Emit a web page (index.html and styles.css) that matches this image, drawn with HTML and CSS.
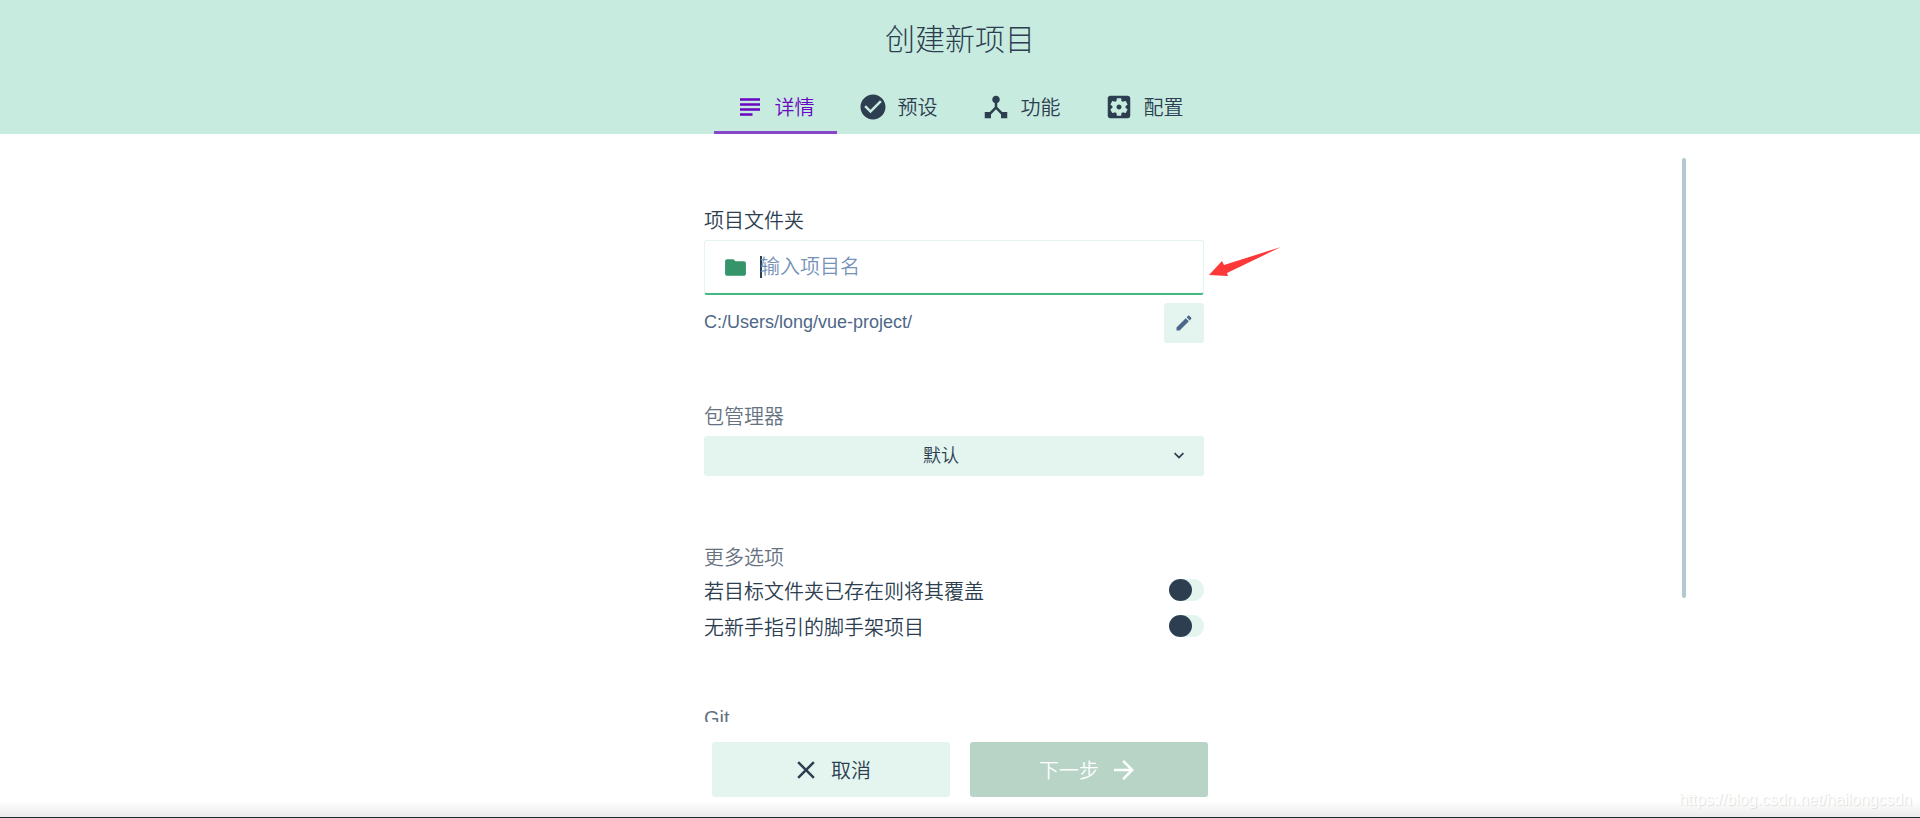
FILE: index.html
```html
<!DOCTYPE html>
<html lang="zh-CN">
<head>
    <meta charset="UTF-8">
    <meta name="viewport" content="width=device-width, initial-scale=1.0">
    <title>创建新项目</title>
    <link rel="stylesheet" href="styles.css">
</head>
<body>
    <header class="header">
        <h1>创建新项目</h1>
        <nav class="tabs">
            <button type="button" class="tab active">
                <svg class="icon" viewBox="0 0 24 24"><path d="M14 17H4v2h10v-2zm6-8H4v2h16V9zM4 15h16v-2H4v2zM4 5v2h16V5H4z"/></svg>
                <span>详情</span>
            </button>
            <button type="button" class="tab">
                <svg class="icon" viewBox="0 0 24 24"><path d="M12 2C6.48 2 2 6.48 2 12s4.48 10 10 10 10-4.48 10-10S17.52 2 12 2zm-2 15l-5-5 1.41-1.41L10 14.17l7.59-7.59L19 8l-9 9z"/></svg>
                <span>预设</span>
            </button>
            <button type="button" class="tab">
                <svg class="icon" viewBox="0 0 24 24"><path d="M17 16l-4-4V8.82C14.16 8.4 15 7.3 15 6c0-1.66-1.34-3-3-3S9 4.34 9 6c0 1.3.84 2.4 2 2.82V12l-4 4H3v5h5v-3.05l4-4.2 4 4.2V21h5v-5h-4z"/></svg>
                <span>功能</span>
            </button>
            <button type="button" class="tab">
                <svg class="icon" viewBox="0 0 24 24"><path d="M12 10c-1.1 0-2 .9-2 2s.9 2 2 2 2-.9 2-2-.9-2-2-2zm7-7H5c-1.11 0-2 .9-2 2v14c0 1.1.89 2 2 2h14c1.11 0 2-.9 2-2V5c0-1.1-.89-2-2-2zm-1.75 9c0 .23-.02.46-.05.68l1.48 1.16c.13.11.17.3.08.45l-1.4 2.42c-.09.15-.27.21-.43.15l-1.74-.7c-.36.28-.76.51-1.18.69l-.26 1.85c-.03.17-.18.3-.35.3h-2.8c-.17 0-.32-.13-.35-.29l-.26-1.85c-.43-.18-.82-.41-1.18-.69l-1.74.7c-.16.06-.34 0-.43-.15l-1.4-2.42c-.09-.15-.05-.34.08-.45l1.48-1.16c-.03-.23-.05-.46-.05-.69 0-.23.02-.46.05-.68l-1.48-1.16c-.13-.11-.17-.3-.08-.45l1.4-2.42c.09-.15.27-.21.43-.15l1.74.7c.36-.28.76-.51 1.18-.69l.26-1.85c.03-.17.18-.3.35-.3h2.8c.17 0 .32.13.35.29l.26 1.85c.43.18.82.41 1.18.69l1.74-.7c.16-.06.34 0 .43.15l1.4 2.42c.09.15.05.34-.08.45l-1.48 1.16c.03.23.05.46.05.69z"/></svg>
                <span>配置</span>
            </button>
        </nav>
    </header>

    <main class="content">
        <form class="form" id="createForm">
            <div class="group">
                <label class="label" for="folder">项目文件夹</label>
                <div class="input-box">
                    <svg class="folder" viewBox="0 0 24 24"><path d="M10 4H4c-1.1 0-1.99.9-1.99 2L2 18c0 1.1.9 2 2 2h16c1.1 0 2-.9 2-2V8c0-1.1-.9-2-2-2h-8l-2-2z"/></svg>
                    <span class="caret"></span>
                    <input type="text" id="folder" placeholder="输入项目名">
                    <svg class="pointer" viewBox="0 0 74 30"><path d="M0 28L13 14L15 18L72 0L18 26L19 29Z"/></svg>
                </div>
                <div class="path-row">
                    <span>C:/Users/long/vue-project/</span>
                    <button type="button" class="edit" aria-label="编辑">
                        <svg viewBox="0 0 24 24"><path d="M3 17.25V21h3.75L17.81 9.94l-3.75-3.75L3 17.25zM20.71 7.04c.39-.39.39-1.02 0-1.41l-2.34-2.34c-.39-.39-1.02-.39-1.41 0l-1.83 1.83 3.75 3.75 1.83-1.83z"/></svg>
                    </button>
                </div>
            </div>

            <div class="group manager">
                <label class="label muted" for="manager">包管理器</label>
                <div class="select-box">
                    <select id="manager">
                        <option>默认</option>
                        <option>npm</option>
                        <option>yarn</option>
                    </select>
                    <svg viewBox="0 0 24 24"><path d="M7.41 7.84L12 12.42l4.59-4.58L18 9.25l-6 6-6-6z"/></svg>
                </div>
            </div>

            <div class="group">
                <div class="label muted">更多选项</div>
                <label class="switch">
                    <span>若目标文件夹已存在则将其覆盖</span>
                    <input type="checkbox">
                </label>
                <label class="switch">
                    <span>无新手指引的脚手架项目</span>
                    <input type="checkbox">
                </label>
            </div>

            <div class="group">
                <div class="label muted">Git</div>
            </div>
        </form>
        <div class="scrollbar"></div>
    </main>

    <footer class="footer">
        <div class="actions">
            <button type="button" class="btn">
                <svg class="icon" viewBox="0 0 24 24"><path d="M19 6.41L17.59 5 12 10.59 6.41 5 5 6.41 10.59 12 5 17.59 6.41 19 12 13.41 17.59 19 19 17.59 13.41 12z"/></svg>
                <span>取消</span>
            </button>
            <button type="submit" form="createForm" class="btn next" disabled>
                <span>下一步</span>
                <svg class="icon" viewBox="0 0 24 24"><path d="M12 4l-1.41 1.41L16.17 11H4v2h12.17l-5.58 5.59L12 20l8-8z"/></svg>
            </button>
        </div>
        <span class="watermark">https://blog.csdn.net/hailongcsdn</span>
    </footer>
</body>
</html>
```
FILE: styles.css
```css
* {
    box-sizing: border-box;
}

body {
    margin: 0;
    height: 100vh;
    display: flex;
    flex-direction: column;
    overflow: hidden;
    background: #fff;
    color: #2c3e50;
    font-family: "Liberation Sans", "Noto Sans CJK SC", sans-serif;
    font-size: 20px;
    font-weight: 350;
}

button,
input,
select {
    font: inherit;
    color: inherit;
    border: none;
    margin: 0;
    padding: 0;
}

svg {
    fill: currentColor;
    flex: none;
}

.icon {
    width: 30px;
    height: 30px;
}

/* header */
.header {
    background: #c8ebdf;
}

.header h1 {
    margin: 0;
    font-size: 30px;
    font-weight: 300;
    line-height: 79px;
    text-align: center;
}

.tabs {
    display: flex;
    justify-content: center;
}

.tab {
    position: relative;
    display: flex;
    align-items: center;
    justify-content: center;
    gap: 10px;
    width: 123px;
    height: 55px;
    padding-right: 2px;
    background: none;
    cursor: pointer;
}

.tab.active {
    color: #6806c1;
}

.tab.active::after {
    content: "";
    position: absolute;
    left: 0;
    right: 0;
    bottom: 0;
    height: 3px;
    background: #8647cb;
}

/* scrolling content */
.content {
    flex: 1;
    min-height: 0;
    display: flex;
    width: calc(100% - 468px);
    margin: 24px auto 0;
    overflow: hidden;
}

.form {
    width: 500px;
    margin: 0 auto;
    padding-top: 49px;
}

.group {
    margin-bottom: 60px;
}

.manager {
    margin-bottom: 68px;
}

.label {
    display: block;
    line-height: 28px;
}

.muted {
    color: #66727f;
}

.input-box {
    position: relative;
    display: flex;
    align-items: center;
    height: 55px;
    margin-top: 5px;
    padding-left: 18px;
    border: 1px solid #e4f5ef;
    border-bottom: 2px solid #42b983;
    border-radius: 3px;
}

.folder {
    width: 25px;
    height: 25px;
    color: #35946a;
}

.caret {
    width: 2px;
    height: 22px;
    margin: 0 -2px 0 12px;
    background: #2c3e50;
}

.input-box input {
    flex: 1;
    height: 40px;
    background: none;
    outline: none;
}

.input-box input::placeholder {
    color: #7593b8;
    opacity: 1;
}

.pointer {
    position: absolute;
    left: 504px;
    top: 6px;
    width: 74px;
    height: 30px;
    color: #fc3938;
}

.path-row {
    display: flex;
    justify-content: space-between;
    margin-top: 8px;
    color: #4e6788;
    font-size: 18px;
    line-height: 38px;
}

.edit {
    display: flex;
    align-items: center;
    justify-content: center;
    width: 40px;
    height: 40px;
    background: #e4f5ef;
    border-radius: 3px;
    cursor: pointer;
}

.edit svg {
    width: 20px;
    height: 20px;
}

.select-box {
    position: relative;
    margin-top: 5px;
}

.select-box select {
    appearance: none;
    display: block;
    width: 100%;
    height: 40px;
    padding: 0 40px 0 14px;
    background: #e4f5ef;
    border-radius: 3px;
    font-size: 18px;
    text-align-last: center;
}

.select-box svg {
    position: absolute;
    right: 15px;
    top: 10px;
    width: 20px;
    height: 20px;
    pointer-events: none;
}

.switch {
    display: flex;
    align-items: center;
    justify-content: space-between;
    height: 36px;
}

.switch input {
    appearance: none;
    width: 35px;
    height: 22px;
    border-radius: 11px;
    background: #e4f5ef;
}

.switch input::before {
    content: "";
    display: block;
    width: 23px;
    height: 22px;
    border-radius: 50%;
    background: #2c3e50;
}

.switch input:checked::before {
    margin-left: auto;
}

.scrollbar {
    width: 4px;
    height: 78%;
    margin-left: 8px;
    border-radius: 2px;
    background: #b3c8d1;
}

/* bottom bar */
.footer {
    position: relative;
    padding: 20px 0;
    border-bottom: 1px solid #1d2935;
    background: linear-gradient(to top, #ebebeb, #fff 16px);
}

.actions {
    display: flex;
    justify-content: center;
    gap: 20px;
}

.btn {
    display: flex;
    align-items: center;
    justify-content: center;
    gap: 10px;
    width: 238px;
    height: 55px;
    background: #e4f5ef;
    border-radius: 3px;
    cursor: pointer;
}

.next {
    background: #b7d4c7;
    color: #fff;
    cursor: default;
}

.watermark {
    position: absolute;
    right: 8px;
    bottom: 8px;
    color: #fff;
    font-size: 16px;
    text-shadow: 1px 1px 1px #ddd;
}
```
